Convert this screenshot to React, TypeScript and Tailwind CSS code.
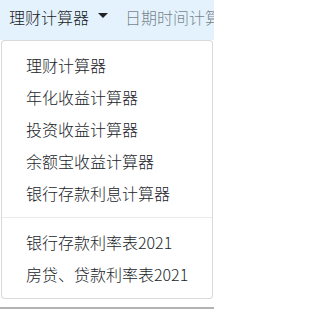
import React from "react";

const group1 = ["理财计算器", "年化收益计算器", "投资收益计算器", "余额宝收益计算器", "银行存款利息计算器"];
const group2 = ["银行存款利率表2021", "房贷、贷款利率表2021"];

export default function App() {
  return (
    <div className="relative flex h-[309px] w-[214px] flex-col overflow-hidden bg-white font-['Noto_Sans_CJK_SC','Microsoft_YaHei',sans-serif] font-light">
      <div className="flex h-[40px] shrink-0 items-start whitespace-nowrap bg-[#e3f2fd] pl-[9px] pt-[5px] text-[16px] leading-[24px]">
        <span className="flex items-center text-black/90">
          理财计算器
          <span className="ml-[9px] mt-[-4px] h-0 w-0 border-x-[5px] border-t-[5px] border-x-transparent border-t-[#222]" />
        </span>
        <span className="ml-[17px] text-black/50">日期时间计算器</span>
      </div>
      <div className="flex-1" />
      <div className="h-[2px] shrink-0 bg-[#b3b3b3]" />

      <div className="absolute left-[1px] top-[40px] w-[212px] rounded-[4px] border border-black/15 bg-white py-2 text-[16px] leading-[24px] text-[#212529]">
        {group1.map((t) => (
          <div key={t} className="whitespace-nowrap px-[24px] py-[4px]">
            {t}
          </div>
        ))}
        <div className="my-2 border-t border-[#e9ecef]" />
        {group2.map((t) => (
          <div key={t} className="whitespace-nowrap px-[24px] py-[4px]">
            {t}
          </div>
        ))}
      </div>
    </div>
  );
}
